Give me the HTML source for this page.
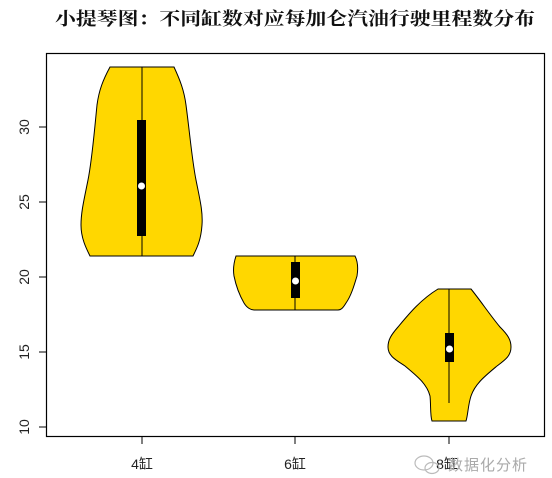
<!DOCTYPE html>
<html><head><meta charset="utf-8"><style>
html,body{margin:0;padding:0;background:#fff;}
svg{display:block;}
</style></head><body>
<svg width="552" height="478" viewBox="0 0 552 478" xmlns="http://www.w3.org/2000/svg">
<rect width="552" height="478" fill="#fff"/>
<text x="55" y="25" font-family="'Noto Serif CJK SC','WenQuanYi Zen Hei',serif" font-weight="bold" font-size="18" textLength="480" lengthAdjust="spacingAndGlyphs" fill="#111">小提琴图：不同缸数对应每加仑汽油行驶里程数分布</text>
<rect x="46.5" y="53.5" width="498" height="383" fill="none" stroke="#000" stroke-width="1.2"/>
<!-- y axis ticks -->
<g stroke="#000" stroke-width="1">
<line x1="46" y1="127" x2="39" y2="127"/>
<line x1="46" y1="202" x2="39" y2="202"/>
<line x1="46" y1="277" x2="39" y2="277"/>
<line x1="46" y1="352" x2="39" y2="352"/>
<line x1="46" y1="427" x2="39" y2="427"/>
<line x1="142" y1="437" x2="142" y2="444"/>
<line x1="295" y1="437" x2="295" y2="444"/>
<line x1="449" y1="437" x2="449" y2="444"/>
</g>
<g font-family="'Liberation Sans',sans-serif" font-size="14" fill="#222" text-anchor="middle">
<text transform="translate(29,127) rotate(-90)">30</text>
<text transform="translate(29,202) rotate(-90)">25</text>
<text transform="translate(29,277) rotate(-90)">20</text>
<text transform="translate(29,352) rotate(-90)">15</text>
<text transform="translate(29,427) rotate(-90)">10</text>
</g>
<g font-family="'Liberation Sans','Noto Sans CJK SC',sans-serif" font-size="14" fill="#222" text-anchor="middle">
<text x="142" y="469">4缸</text>
<text x="295" y="469">6缸</text>
<text x="447" y="469">8缸</text>
</g>
<!-- violins -->
<g fill="#FFD700" stroke="#000" stroke-width="1">
<path d="M110,67 L174,67 C180,80 184,90 186,105 C190,135 192,160 196,180 C200,200 203,212 202,225 C201,240 197,248 193,256 L90,256 C86,248 81,238 81,225 C81,212 84,200 88,180 C92,160 94,135 97,105 C99,90 103,80 110,67 Z"/>
<path d="M236,256 L355,256 C358,262 358,270 357,276 C354,286 351,296 346,303 C343,308 341,310 338,310 L254,310 C251,310 247,308 244,303 C240,296 236,286 234,276 C233,270 234,262 236,256 Z"/>
<path d="M438,289 L471,289 C480,300 490,315 500,327 C508,335 511,340 511,347 C511,356 505,360 497,366 C485,376 475,384 471,396 C468,405 468,415 466,421 L432,421 C430,415 431,405 430,396 C427,384 417,376 405,366 C396,360 388,356 388,347 C388,340 391,335 398,327 C408,315 420,300 438,289 Z"/>
</g>
<g stroke="#000" stroke-width="1">
<line x1="142" y1="67" x2="142" y2="256"/>
<line x1="295" y1="256" x2="295" y2="310"/>
<line x1="449" y1="289" x2="449" y2="403"/>
</g>
<rect x="137" y="120" width="9" height="116" fill="#000"/>
<rect x="291" y="262" width="9" height="36" fill="#000"/>
<rect x="445" y="333" width="9" height="29" fill="#000"/>
<g fill="#fff">
<circle cx="141.5" cy="186" r="3.5"/>
<circle cx="295.5" cy="281" r="3.5"/>
<circle cx="449.5" cy="349" r="3.5"/>
</g>
<!-- watermark -->
<g fill="none" stroke="#bbb" stroke-width="1.2">
<ellipse cx="424" cy="463" rx="9" ry="7"/>
<ellipse cx="432" cy="468" rx="7" ry="5.5"/>
</g>
<text x="448" y="470" font-family="'Noto Sans CJK SC',sans-serif" font-size="15" fill="#aaa" letter-spacing="1">数据化分析</text>
</svg>
</body></html>
